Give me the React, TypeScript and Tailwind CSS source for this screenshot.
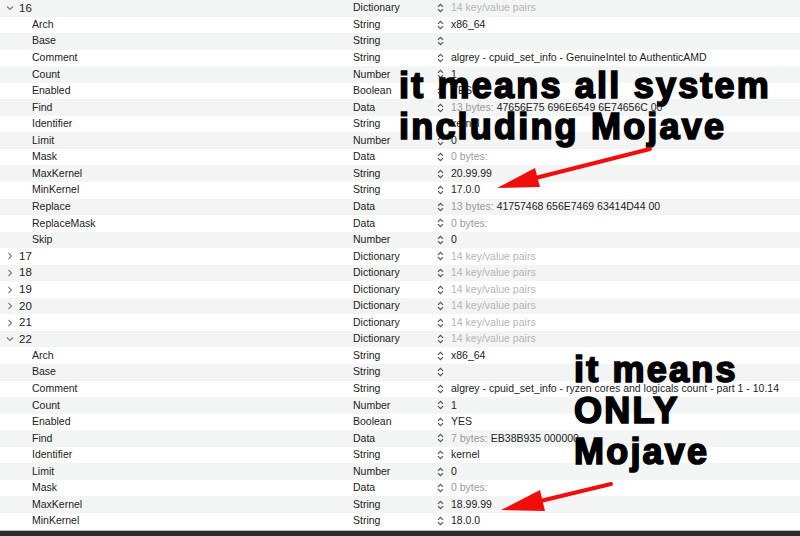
import React from "react";

type Row = {
  key: string;
  type: string;
  value?: string;
  dim?: string; // grey prefix such as "13 bytes:"
  group?: "open" | "closed";
};

const patch16: Row[] = [
  { key: "Arch", type: "String", value: "x86_64" },
  { key: "Base", type: "String", value: "" },
  { key: "Comment", type: "String", value: "algrey - cpuid_set_info - GenuineIntel to AuthenticAMD" },
  { key: "Count", type: "Number", value: "1" },
  { key: "Enabled", type: "Boolean", value: "YES" },
  { key: "Find", type: "Data", dim: "13 bytes:", value: "47656E75 696E6549 6E74656C 00" },
  { key: "Identifier", type: "String", value: "kernel" },
  { key: "Limit", type: "Number", value: "0" },
  { key: "Mask", type: "Data", dim: "0 bytes:", value: "" },
  { key: "MaxKernel", type: "String", value: "20.99.99" },
  { key: "MinKernel", type: "String", value: "17.0.0" },
  { key: "Replace", type: "Data", dim: "13 bytes:", value: "41757468 656E7469 63414D44 00" },
  { key: "ReplaceMask", type: "Data", dim: "0 bytes:", value: "" },
  { key: "Skip", type: "Number", value: "0" },
];

const patch22: Row[] = [
  { key: "Arch", type: "String", value: "x86_64" },
  { key: "Base", type: "String", value: "" },
  { key: "Comment", type: "String", value: "algrey - cpuid_set_info - ryzen cores and logicals count - part 1 - 10.14" },
  { key: "Count", type: "Number", value: "1" },
  { key: "Enabled", type: "Boolean", value: "YES" },
  { key: "Find", type: "Data", dim: "7 bytes:", value: "EB38B935 000000" },
  { key: "Identifier", type: "String", value: "kernel" },
  { key: "Limit", type: "Number", value: "0" },
  { key: "Mask", type: "Data", dim: "0 bytes:", value: "" },
  { key: "MaxKernel", type: "String", value: "18.99.99" },
  { key: "MinKernel", type: "String", value: "18.0.0" },
];

const dict = (key: string, group: "open" | "closed"): Row => ({
  key,
  type: "Dictionary",
  dim: "14 key/value pairs",
  group,
});

const rows: Row[] = [
  dict("16", "open"),
  ...patch16,
  dict("17", "closed"),
  dict("18", "closed"),
  dict("19", "closed"),
  dict("20", "closed"),
  dict("21", "closed"),
  dict("22", "open"),
  ...patch22,
];

function Disclosure({ open }: { open: boolean }) {
  return (
    <svg width="8" height="8" viewBox="0 0 8 8" className="shrink-0">
      {open ? (
        <path d="M1 2.5 L4 5.5 L7 2.5" fill="none" stroke="#7a7a7a" strokeWidth="1.1" />
      ) : (
        <path d="M2.5 1 L5.5 4 L2.5 7" fill="none" stroke="#7a7a7a" strokeWidth="1.1" />
      )}
    </svg>
  );
}

function Stepper() {
  return (
    <svg width="7" height="10" viewBox="0 0 7 10" className="shrink-0">
      <path d="M1 3.8 L3.5 1.3 L6 3.8" fill="none" stroke="#555" strokeWidth="1.2" />
      <path d="M1 6.2 L3.5 8.7 L6 6.2" fill="none" stroke="#555" strokeWidth="1.2" />
    </svg>
  );
}

function PlistRow({ row, index }: { row: Row; index: number }) {
  const stripe = index % 2 === 0 ? "bg-[#f3f4f4]" : "bg-white";
  return (
    <div className={`flex h-[16.55px] items-center text-[10.5px] text-[#222] ${stripe}`}>
      <div className="flex w-[353px] shrink-0 items-center">
        {row.group ? (
          <>
            <div className="flex w-[18px] justify-center pl-[2px]">
              <Disclosure open={row.group === "open"} />
            </div>
            <span className="pl-[1px] text-[11.5px]">{row.key}</span>
          </>
        ) : (
          <span className="pl-[32px]">{row.key}</span>
        )}
      </div>
      <div className="w-[84px] shrink-0">{row.type}</div>
      <Stepper />
      <div className="flex items-center gap-[3px] whitespace-nowrap pl-[7px]">
        {row.dim && <span className={row.group ? "text-[#b5b5b5]" : "text-[#9a9a9a]"}>{row.dim}</span>}
        {row.value && <span>{row.value}</span>}
      </div>
    </div>
  );
}

function Arrow({ from, tip, back1, back2 }: { from: [number, number]; tip: [number, number]; back1: [number, number]; back2: [number, number] }) {
  const neckX = (back1[0] + back2[0]) / 2;
  const neckY = (back1[1] + back2[1]) / 2;
  return (
    <>
      <line x1={from[0]} y1={from[1]} x2={neckX} y2={neckY} stroke="#f20d0d" strokeWidth="4" strokeLinecap="round" />
      <polygon points={`${tip[0]},${tip[1]} ${back1[0]},${back1[1]} ${back2[0]},${back2[1]}`} fill="#f20d0d" />
    </>
  );
}

const callout =
  "absolute whitespace-pre font-['Liberation_Sans',Arial,sans-serif] text-[36px] font-bold leading-[41px] tracking-[2.2px] text-black [-webkit-text-stroke:1.7px_black]";

export default function App() {
  return (
    <div className="relative h-[536px] w-[800px] overflow-hidden bg-white font-['Liberation_Sans',Arial,sans-serif]">
      <div className="flex h-full flex-col">
        <div className="flex flex-col">
          {rows.map((row, i) => (
            <PlistRow key={i} row={row} index={i} />
          ))}
        </div>
        <div className="h-[1px] bg-[#b9b9b9]" />
        <div className="flex-1 bg-[#2c2c2c]" />
      </div>

      <div className={`${callout} left-[399px] top-[65px]`}>{"it means all system\nincluding Mojave"}</div>
      <div className={`${callout} left-[574px] top-[349px]`}>{"it means\nONLY\nMojave"}</div>

      <svg className="pointer-events-none absolute left-0 top-0" width="800" height="536">
        <Arrow from={[650, 149]} tip={[497, 188]} back1={[535, 168]} back2={[540, 187]} />
        <Arrow from={[611, 484]} tip={[501, 510]} back1={[540, 490]} back2={[545, 511]} />
      </svg>
    </div>
  );
}
